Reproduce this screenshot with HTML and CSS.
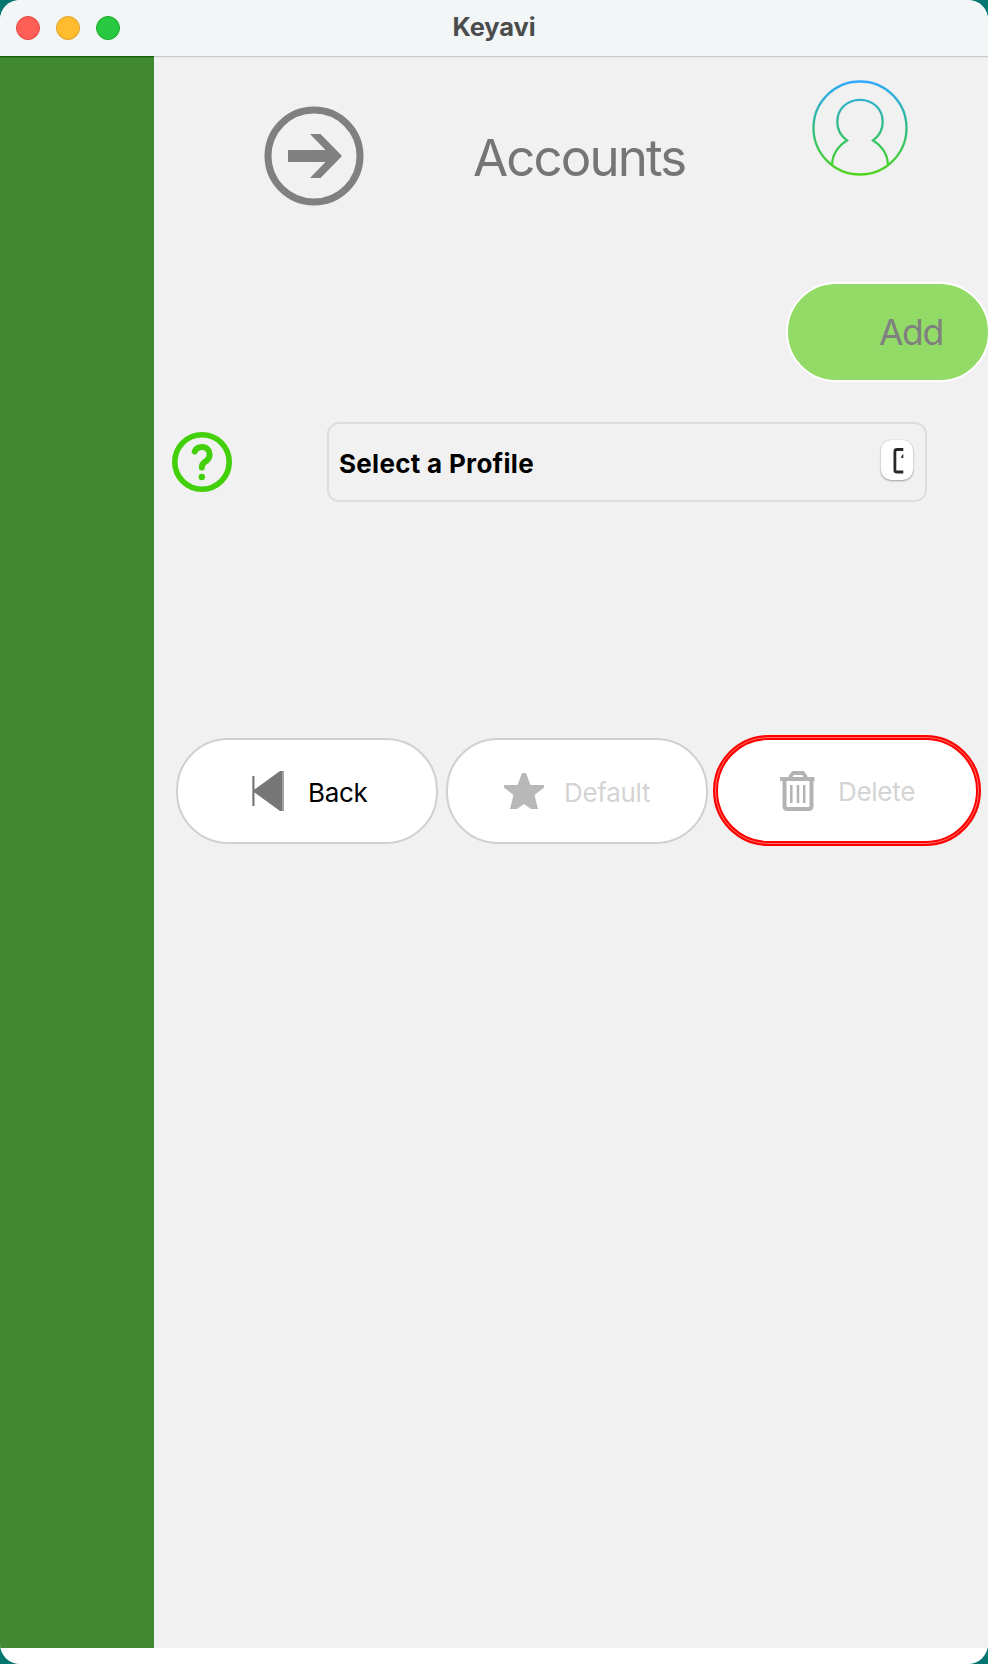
FILE: index.html
```html
<!DOCTYPE html>
<html lang="en">
<head>
<meta charset="utf-8">
<title>Keyavi</title>
<link rel="stylesheet" href="styles.css">
</head>
<body>
<div class="window">
  <header class="titlebar">
    <div class="lights"><i class="light close"></i><i class="light minimize"></i><i class="light expand"></i></div>
    <h1 class="window-title">Keyavi</h1>
  </header>
  <div class="content">
    <aside class="sidebar"></aside>
    <main class="main">
      <div class="page-head">
        <svg class="arrow" viewBox="0 0 100 100"><circle cx="50" cy="50" r="46" fill="none" stroke="#808080" stroke-width="7"/><path fill="#808080" d="M46 28h10.500L78 50 56.500 72H46L61.500 56H24V44h37.500z"/></svg>
        <h2 class="page-title">Accounts</h2>
        <svg class="avatar" viewBox="0 0 98 98">
          <defs><linearGradient id="tint" gradientUnits="userSpaceOnUse" x1="0" y1="2" x2="0" y2="96"><stop offset="0" stop-color="#30a8ff"/><stop offset=".5" stop-color="#30bd83"/><stop offset="1" stop-color="#4fd51c"/></linearGradient></defs>
          <g fill="none" stroke="url(#tint)" stroke-width="2.300"><circle cx="49" cy="49" r="46.500"/><path d="M21 86C21.500 75 27 67 36 61.500C30 57 26.300 51 26.300 43C26.300 30 36 20.800 49 20.800S71.700 30 71.700 43C71.700 51 68 57 62 61.500C71 67 76.500 75 77 86"/></g>
        </svg>
      </div>
      <div class="add-row"><button class="add">Add</button></div>
      <div class="profile-row">
        <svg class="help" viewBox="0 0 60 60"><g fill="none" stroke="#43d00b" stroke-width="5.600"><circle cx="30" cy="30" r="27.200"/><path stroke-width="6" stroke-linecap="round" stroke-linejoin="round" d="M22.700 19.500C24 16.500 26.500 15 30 15C34.500 15 37.600 18.200 37.600 22.500C37.600 26.500 35.500 28.500 32.500 30.200C30.500 31.500 29.800 32.500 29.800 35.500"/></g><circle cx="29.800" cy="45" r="3.200" fill="#43d00b"/></svg>
        <div class="select">
          <span class="select-label">Select a Profile</span>
          <span class="chip"><svg viewBox="0 0 32 40"><path fill="none" stroke="#292929" stroke-width="2.800" d="M22.300 9.500H16Q13.900 9.500 13.900 11.500V30.500Q13.900 32 16 32H22.300"/><path fill="#292929" d="M22.300 14V18H20Q20.300 15.500 22.300 14z"/></svg></span>
        </div>
      </div>
      <div class="actions">
        <button class="action back"><svg class="icon" viewBox="0 0 40 40"><path fill="#767676" d="M4 5h2.500v13.500L32 0h4v40h-4L6.500 21.500V35H4z"/><path fill="#a2a2a2" d="M34 0h2v40h-2zM4 5h1v30H4z"/></svg><span>Back</span></button>
        <button class="action default" disabled><svg class="icon" viewBox="0 0 40 40"><path fill="#b8b8b8" d="M18 2h4l4.500 12H40v2.500L30.500 24 34 38h-7l-7-5-7 5H6L9.500 24 0 16.500V14h13.500z"/></svg><span>Default</span></button>
        <button class="action delete" disabled><svg class="icon" viewBox="0 0 40 40"><g fill="none" stroke="#b3b3b3"><path stroke-width="4" d="M3 8h34.500M7.500 8v27q0 3 3 3h21q3 0 3-3V8"/><path stroke-width="3.800" stroke-linejoin="round" d="M13.500 8V5.500L16 2h10l2.500 3.500V8"/><path stroke-width="2.500" d="M14.300 14v18M21 14v18M27.200 14v18"/></g></svg><span>Delete</span></button>
      </div>
    </main>
  </div>
</div>
</body>
</html>
```
FILE: styles.css
```css
* { box-sizing: border-box; }
body { margin: 0; height: 1664px; overflow: hidden; background: #04756f; font-family: Inter, "Liberation Sans", sans-serif; }
.window { display: flex; flex-direction: column; height: 1664px; border-radius: 20px; overflow: hidden; background: #fff; }
.titlebar { display: grid; grid-template-columns: 120px 1fr 120px; align-items: center; height: 56px; flex: none; background: #f2f6f7; }
.lights { display: flex; gap: 16px; padding-left: 16px; }
.light { width: 24px; height: 24px; flex: none; border-radius: 50%; border: 1px solid; }
.close { background: #ff5f57; border-color: #e2463f; }
.minimize { background: #febc2e; border-color: #dfa023; }
.expand { background: #28c840; border-color: #1aab29; }
.window-title { margin: 0; text-align: center; font-size: 25.500px; line-height: 54px; font-weight: 700; letter-spacing: -.1px; color: #4b4c4c; padding-bottom: 2px; }
.content { display: flex; height: 1592px; }
.sidebar { width: 154px; flex: none; background: #418932; border-top: 1px solid #146400; box-shadow: inset 0 1px #30792a; }
.main { width: 834px; flex: none; background: #f1f1f1; border-top: 1px solid #c9cbcb; box-shadow: inset 0 1px #e4e4e4; }
.page-head { display: flex; height: 225px; padding: 22px 0 0 110px; }
.arrow { width: 100px; height: 100px; margin-top: 27px; flex: none; }
.page-title { margin: 46px 0 0 109px; width: 338px; height: 66px; line-height: 66px; font-size: 51px; font-weight: 400; letter-spacing: -1.900px; color: #757575; }
.avatar { width: 98px; height: 98px; flex: none; }
.add-row { display: flex; padding-left: 632px; overflow: hidden; }
.add { flex: none; width: 204px; height: 100px; padding: 0 0 0 91px; border: 2px solid #fff; border-radius: 50px; background: #93db67; color: #808080; font: 400 35.500px Inter, sans-serif; text-align: left; letter-spacing: -1.400px; }
.profile-row { display: flex; align-items: center; gap: 95px; margin-top: 40px; padding-left: 18px; }
.help { width: 60px; height: 60px; }
.select { display: flex; align-items: center; justify-content: space-between; width: 600px; height: 80px; padding: 0 12px 0 10px; border: 2px solid #ddd; border-radius: 12px; }
.select-label { font-size: 26px; line-height: 32px; padding-top: 3px; font-weight: 700; letter-spacing: .300px; color: #000; }
.chip { width: 32px; height: 40px; margin-top: -4px; border-radius: 10px; background: #fff; box-shadow: 0 1px 2px #0005, 0 0 1px #0004; }
.chip svg { display: block; width: 32px; height: 40px; }
.actions { display: flex; align-items: center; margin-top: 233px; padding-left: 22px; }
.action { display: flex; align-items: center; width: 262px; height: 106px; flex: none; padding: 0; border: 2px solid #d0d0d0; border-radius: 52px; background: #fff; color: #000; font: 400 26px Inter, sans-serif; letter-spacing: -.300px; }
.action:disabled { color: #d4d4d4; }
.icon { width: 40px; height: 40px; flex: none; }
.action span { padding-top: 3px; }
.back { padding-left: 70px; gap: 20px; }
.back .icon, .default .icon { margin-top: 1px; }
.default { margin-left: 8px; padding-left: 56px; gap: 20px; }
.delete { position: relative; width: 268px; height: 111px; margin-left: 5px; padding-left: 59px; gap: 21px; border: 5px solid #f00; border-radius: 56px; }
.delete span { padding-top: 1px; }
.delete::after { content: ""; position: absolute; inset: -3px; border: 1px solid #ff6f68; border-radius: 53px; }
```
